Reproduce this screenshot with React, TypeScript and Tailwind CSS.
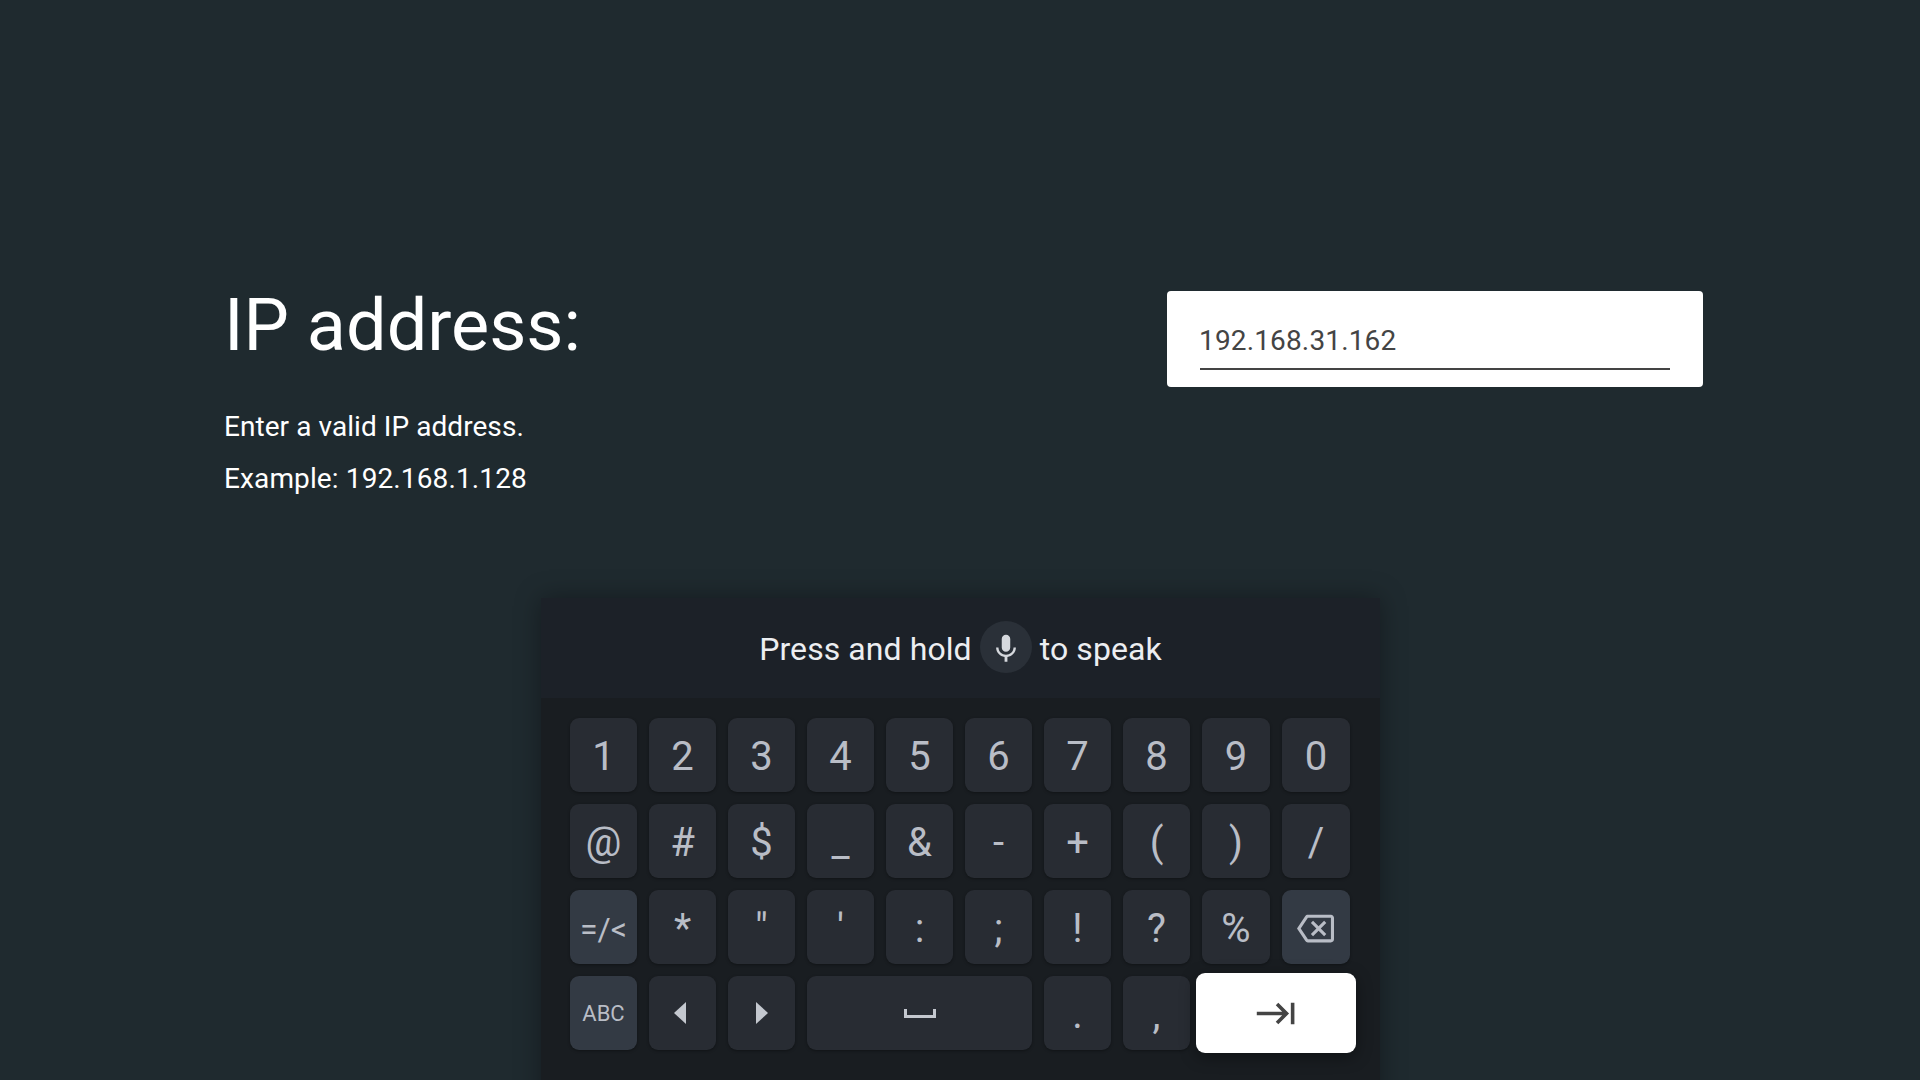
import { ReactNode } from 'react';

const digits = ['1', '2', '3', '4', '5', '6', '7', '8', '9', '0'];
const symbols = ['@', '#', '$', '_', '&', '-', '+', '(', ')', '/'];
const punctuation = ['*', '"', "'", ':', ';', '!', '?', '%'];

function Key({ children, active, className = 'text-[40px] pt-[4px]' }: { children: ReactNode; active?: boolean; className?: string }) {
  return (
    <div
      className={`h-[74px] rounded-[9px] flex items-center justify-center leading-none text-[#b9bdc6] shadow-[0_1px_3px_rgba(0,0,0,0.35)] ${
        active ? 'bg-[#333a44]' : 'bg-[#282c33]'
      } ${className}`}
    >
      {children}
    </div>
  );
}

export default function App() {
  return (
    <div className="h-screen w-full overflow-hidden bg-[#1f2a2f] pt-[285px] font-['Roboto',sans-serif]">
      {/* Prompt + field */}
      <div className="flex items-start pl-[224px] pr-[217px]">
        <div>
          <h1 className="mt-[1px] text-[72px] leading-[80px] font-normal text-white mb-[35px]">IP address:</h1>
          <p className="text-[28px] leading-[52px] tracking-[0.06px] text-white">Enter a valid IP address.</p>
          <p className="text-[28px] leading-[52px] tracking-[0.12px] text-white">Example: 192.168.1.128</p>
        </div>
        <div className="ml-auto mt-[6px] w-[536px] h-[96px] bg-white rounded-[4px] pl-[33px] pr-[33px] pt-[29px]">
          <div className="-ml-[1px] text-[28px] leading-[40px] tracking-[0.15px] translate-y-[1px] text-[#444444]">192.168.31.162</div>
          <div className="mt-[8px] h-[2px] bg-[#444444]" />
        </div>
      </div>

      {/* Keyboard */}
      <div className="ml-[541px] mt-[93px] w-[839px] h-[600px] bg-[#191d21] shadow-[0_0_24px_rgba(0,0,0,0.35)]">
        <div className="h-[100px] bg-[#1c2128] flex items-center justify-center gap-[8px] text-[32px] tracking-[0.08px] text-[#eceef1]">
          <span className="translate-y-[1px]">Press and hold</span>
          <span className="w-[52px] h-[52px] rounded-full bg-[#2a3038] flex items-center justify-center -mt-[2px]">
            <svg viewBox="0 0 24 24" className="w-[34px] h-[34px] translate-y-[2px] fill-[#d5d8dd]">
              <path d="M12 14c1.66 0 2.99-1.34 2.99-3L15 5c0-1.66-1.34-3-3-3S9 3.34 9 5v6c0 1.66 1.34 3 3 3zm5.3-3c0 3-2.54 5.1-5.3 5.1S6.7 14 6.7 11H5c0 3.41 2.72 6.23 6 6.72V21h2v-3.28c3.28-.48 6-3.3 6-6.72h-1.7z" />
            </svg>
          </span>
          <span className="translate-y-[1px]">to speak</span>
        </div>

        <div className="grid grid-cols-[repeat(8,67px)_68px_68px] gap-x-[12px] gap-y-[12px] pl-[29px] pt-[20px]">
          {digits.map((k) => (
            <Key key={k}>{k}</Key>
          ))}
          {symbols.map((k) => (
            <Key key={k}>{k}</Key>
          ))}
          <Key active className="text-[32px] pt-[3px]">=/&lt;</Key>
          {punctuation.map((k) => (
            <Key key={k}>{k}</Key>
          ))}
          <Key active className="">
            <svg viewBox="0 0 24 24" className="w-[37px] h-[37px] translate-y-[1px] -translate-x-[1px] fill-[#b9bdc6]">
              <path d="M22 3H7c-.69 0-1.23.35-1.59.88L0 12l5.41 8.11c.36.53.9.89 1.59.89h15c1.1 0 2-.9 2-2V5c0-1.1-.9-2-2-2zm0 16H7.07L2.4 12l4.66-7H22v14zm-11.59-2L14 13.41 17.59 17 19 15.59 15.41 12 19 8.41 17.59 7 14 10.59 10.41 7 9 8.41 12.59 12 9 15.59z" />
            </svg>
          </Key>

          <Key active className="text-[22px] pt-[2px]">ABC</Key>
          <Key className="">
            <svg viewBox="0 0 12 22" className="w-[12px] h-[22px] -ml-[5px] fill-[#c4c8cf]">
              <path d="M12 0v22L0 11z" />
            </svg>
          </Key>
          <Key className="">
            <svg viewBox="0 0 12 22" className="w-[12px] h-[22px] fill-[#c4c8cf]">
              <path d="M0 0v22l12-11z" />
            </svg>
          </Key>
          <Key className="col-span-3">
            <svg viewBox="0 0 32 9" className="w-[32px] h-[9px] fill-[#c4c8cf]">
              <path d="M0 0h3v6h26V0h3v9H0z" />
            </svg>
          </Key>
          <Key>.</Key>
          <Key>,</Key>
          <div className="col-span-2 -mx-[6px] -my-[3px] h-[80px] rounded-[9px] bg-white flex items-center justify-center shadow-[0_4px_16px_rgba(0,0,0,0.4)]">
            <svg viewBox="0 0 24 24" className="w-[43px] h-[43px] fill-[#444444]">
              <path d="M11.59 7.41L15.17 11H1v2h14.17l-3.59 3.59L13 18l6-6-6-6-1.41 1.41zM20 6v12h2V6h-2z" />
            </svg>
          </div>
        </div>
      </div>
    </div>
  );
}
